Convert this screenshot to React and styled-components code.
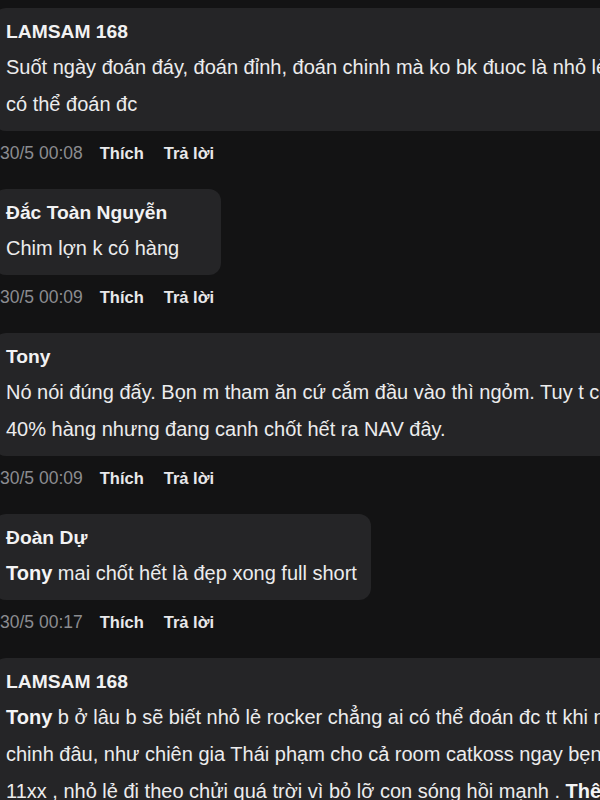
import React from "react";
import styled, { createGlobalStyle } from "styled-components";

const GlobalStyle = createGlobalStyle`
  html, body {
    margin: 0;
    padding: 0;
    background: #131314;
    overflow: hidden;
  }
  body {
    font-family: "Liberation Sans", Arial, sans-serif;
    color: #ededee;
  }
`;

const Feed = styled.div`
  width: 1000px;
  margin-left: -6px;
  padding-top: 8px;
  display: flex;
  flex-direction: column;
  align-items: flex-start;
`;

const Comment = styled.div`
  display: flex;
  flex-direction: column;
  align-items: flex-start;
`;

const Bubble = styled.div`
  background: #252527;
  border-radius: 12px;
  padding: 7px 14px 8px 12px;
  min-width: ${(p) => p.$minWidth || 0}px;
  box-sizing: border-box;
`;

const Author = styled.div`
  font-size: 19.25px;
  font-weight: 700;
  line-height: 34px;
  color: #f2f2f3;
  white-space: nowrap;
`;

const Text = styled.div`
  font-size: 20px;
  line-height: 37px;
  color: #ececed;
  white-space: nowrap;
`;

const Mention = styled.b`
  font-weight: 700;
  color: #f4f4f5;
`;

const Meta = styled.div`
  display: flex;
  align-items: center;
  height: 20px;
  margin: 12px 0 26px 6px;
  font-size: 16.5px;
  line-height: 20px;
  white-space: nowrap;
`;

const Time = styled.span`
  color: #8b8c90;
  font-size: 17.5px;
  margin-right: 17px;
`;

const Action = styled.span`
  color: #e8e8ea;
  font-weight: 700;
  margin-right: 20px;
`;

const comments = [
  {
    author: "LAMSAM 168",
    lines: [
      "Suốt ngày đoán đáy, đoán đỉnh, đoán chinh mà ko bk đuoc là nhỏ lẻ chẳng ai",
      "có thể đoán đc",
    ],
    time: "30/5 00:08",
  },
  {
    author: "Đắc Toàn Nguyễn",
    lines: ["Chim lợn k có hàng"],
    time: "30/5 00:09",
    minWidth: 227,
  },
  {
    author: "Tony",
    lines: [
      "Nó nói đúng đấy. Bọn m tham ăn cứ cắm đầu vào thì ngỏm. Tuy t còn",
      "40% hàng nhưng đang canh chốt hết ra NAV đây.",
    ],
    time: "30/5 00:09",
  },
  {
    author: "Đoàn Dự",
    mention: "Tony",
    lines: ["mai chốt hết là đẹp xong full short"],
    time: "30/5 00:17",
  },
  {
    author: "LAMSAM 168",
    mention: "Tony",
    lines: [
      "b ở lâu b sẽ biết nhỏ lẻ rocker chẳng ai có thể đoán đc tt khi nào",
      "chinh đâu, như chiên gia Thái phạm cho cả room catkoss ngay bẹn",
      "11xx , nhỏ lẻ đi theo chửi quá trời vì bỏ lỡ con sóng hồi mạnh .",
    ],
    more: "Thêm",
    time: "30/5 00:21",
  },
];

export default function App() {
  return (
    <>
      <GlobalStyle />
      <Feed>
        {comments.map((c, i) => (
          <Comment key={i}>
            <Bubble $minWidth={c.minWidth}>
              <Author>{c.author}</Author>
              {c.lines.map((line, j) => (
                <Text key={j}>
                  {j === 0 && c.mention ? (
                    <>
                      <Mention>{c.mention}</Mention>{" "}
                    </>
                  ) : null}
                  {line}
                  {j === c.lines.length - 1 && c.more ? (
                    <>
                      {" "}
                      <Mention>{c.more}</Mention>
                    </>
                  ) : null}
                </Text>
              ))}
            </Bubble>
            <Meta>
              <Time>{c.time}</Time>
              <Action>Thích</Action>
              <Action>Trả lời</Action>
            </Meta>
          </Comment>
        ))}
      </Feed>
    </>
  );
}
